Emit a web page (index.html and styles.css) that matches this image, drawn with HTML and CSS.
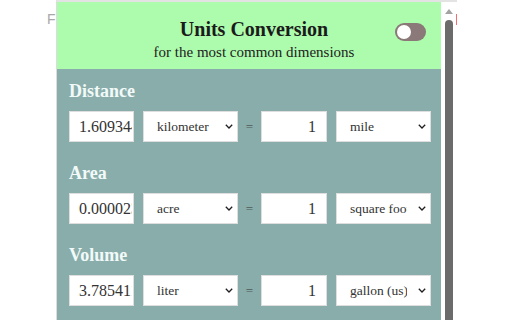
FILE: index.html
```html
<!DOCTYPE html>
<html>
<head>
<meta charset="utf-8">
<link rel="stylesheet" href="styles.css">
</head>
<body>
<div class="bg-page">
  <span class="bg-f">F</span>
</div>
<div class="popup">
  <div class="content">
    <header class="head">
      <h1 class="title">Units Conversion</h1>
      <p class="subtitle">for the most common dimensions</p>
      <span class="toggle"><span class="knob"></span></span>
    </header>
    <main class="body">
      <section class="dim">
        <h2 class="dim-name">Distance</h2>
        <div class="row">
          <input class="num" value="1.609344">
          <div class="sel"><select><option>kilometer</option></select><svg class="chev" viewBox="0 0 8 5"><path d="M0.8 0.8 L4 4 L7.2 0.8"/></svg></div>
          <span class="eq">=</span>
          <input class="num num-right" value="1">
          <div class="sel"><select><option>mile</option></select><svg class="chev" viewBox="0 0 8 5"><path d="M0.8 0.8 L4 4 L7.2 0.8"/></svg></div>
        </div>
      </section>
      <section class="dim">
        <h2 class="dim-name">Area</h2>
        <div class="row">
          <input class="num" value="0.000023">
          <div class="sel"><select><option>acre</option></select><svg class="chev" viewBox="0 0 8 5"><path d="M0.8 0.8 L4 4 L7.2 0.8"/></svg></div>
          <span class="eq">=</span>
          <input class="num num-right" value="1">
          <div class="sel"><select><option>square foot</option></select><svg class="chev" viewBox="0 0 8 5"><path d="M0.8 0.8 L4 4 L7.2 0.8"/></svg></div>
        </div>
      </section>
      <section class="dim">
        <h2 class="dim-name">Volume</h2>
        <div class="row">
          <input class="num" value="3.785411">
          <div class="sel"><select><option>liter</option></select><svg class="chev" viewBox="0 0 8 5"><path d="M0.8 0.8 L4 4 L7.2 0.8"/></svg></div>
          <span class="eq">=</span>
          <input class="num num-right" value="1">
          <div class="sel"><select><option>gallon (us)</option></select><svg class="chev" viewBox="0 0 8 5"><path d="M0.8 0.8 L4 4 L7.2 0.8"/></svg></div>
        </div>
      </section>
    </main>
  </div>
  <div class="scrollbar">
    <span class="arrow"></span>
    <span class="thumb"></span>
  </div>
  <span class="redmark"></span>
</div>
</body>
</html>
```
FILE: styles.css
```css
html, body {
  margin: 0;
  padding: 0;
  background: #ffffff;
  width: 512px;
  height: 320px;
  overflow: hidden;
}
body {
  font-family: "Liberation Serif", "Times New Roman", serif;
  position: relative;
}
.bg-page {
  padding: 10px 0 0 47px;
}
.bg-f {
  font-family: "Liberation Sans", sans-serif;
  font-size: 14px;
  color: #a8a8a8;
}
.popup {
  position: absolute;
  left: 56px;
  top: 0;
  display: flex;
  border-top: 2px solid #e3e3e3;
  border-left: 1px solid #dcdcdc;
  background: #ffffff;
  height: 330px;
}
.content {
  width: 384px;
  display: flex;
  flex-direction: column;
}
.head {
  position: relative;
  background: #adfcad;
  padding: 15px 0 6px 10px;
  text-align: center;
}
.title {
  margin: 0;
  font-size: 20px;
  line-height: 24px;
  font-weight: bold;
  color: #1b1b1b;
}
.subtitle {
  margin: 0;
  font-size: 15px;
  line-height: 22px;
  color: #222222;
}
.toggle {
  position: absolute;
  right: 15px;
  top: 21px;
  width: 31px;
  height: 18px;
  border-radius: 9px;
  background: #8b7878;
}
.knob {
  position: absolute;
  left: 2px;
  top: 2px;
  width: 14px;
  height: 14px;
  border-radius: 50%;
  background: #ffffff;
}
.body {
  flex: 1;
  background: #89adaa;
  padding: 12px 10px 0 12px;
}
.dim {
  margin-bottom: 21px;
}
.dim-name {
  margin: 0 0 9px;
  font-size: 18px;
  line-height: 21px;
  font-weight: bold;
  color: #f2faf9;
}
.row {
  display: flex;
  align-items: center;
  height: 31px;
}
.num {
  box-sizing: border-box;
  width: 65px;
  height: 31px;
  border: 1px solid #dedede;
  border-radius: 0;
  padding: 0 1px 0 9px;
  margin: 0;
  font-family: "Liberation Serif", serif;
  font-size: 16px;
  color: #333333;
  background: #ffffff;
  outline: none;
}
.num-right {
  width: 66px;
  text-align: right;
  padding-right: 10px;
}
.sel {
  position: relative;
  margin-left: 9px;
  width: 95px;
  height: 31px;
}
.sel select {
  -webkit-appearance: none;
  appearance: none;
  box-sizing: border-box;
  width: 95px;
  height: 31px;
  margin: 0;
  border: 1px solid #dedede;
  border-radius: 0;
  background: #ffffff;
  padding: 0 23px 0 13px;
  font-family: "Liberation Serif", serif;
  font-size: 13.5px;
  color: #333333;
  outline: none;
}
.chev {
  position: absolute;
  right: 5px;
  top: 13px;
  width: 8px;
  height: 5px;
  fill: none;
  stroke: #1e1e1e;
  stroke-width: 1.3;
  pointer-events: none;
}
.eq {
  width: 23px;
  text-align: center;
  font-size: 13px;
  color: #4d5a59;
}
.scrollbar {
  position: relative;
  width: 16px;
  background: #ffffff;
}
.arrow {
  position: absolute;
  left: 4px;
  top: 7px;
  width: 0;
  height: 0;
  border-left: 4.5px solid transparent;
  border-right: 4.5px solid transparent;
  border-bottom: 5px solid #a3a3a3;
}
.thumb {
  position: absolute;
  left: 4px;
  top: 18px;
  width: 8px;
  height: 320px;
  border-radius: 4px;
  background: #6b6b6b;
}
.redmark {
  position: absolute;
  left: 399px;
  top: 12px;
  width: 1px;
  height: 11px;
  background: #f07070;
}
```
